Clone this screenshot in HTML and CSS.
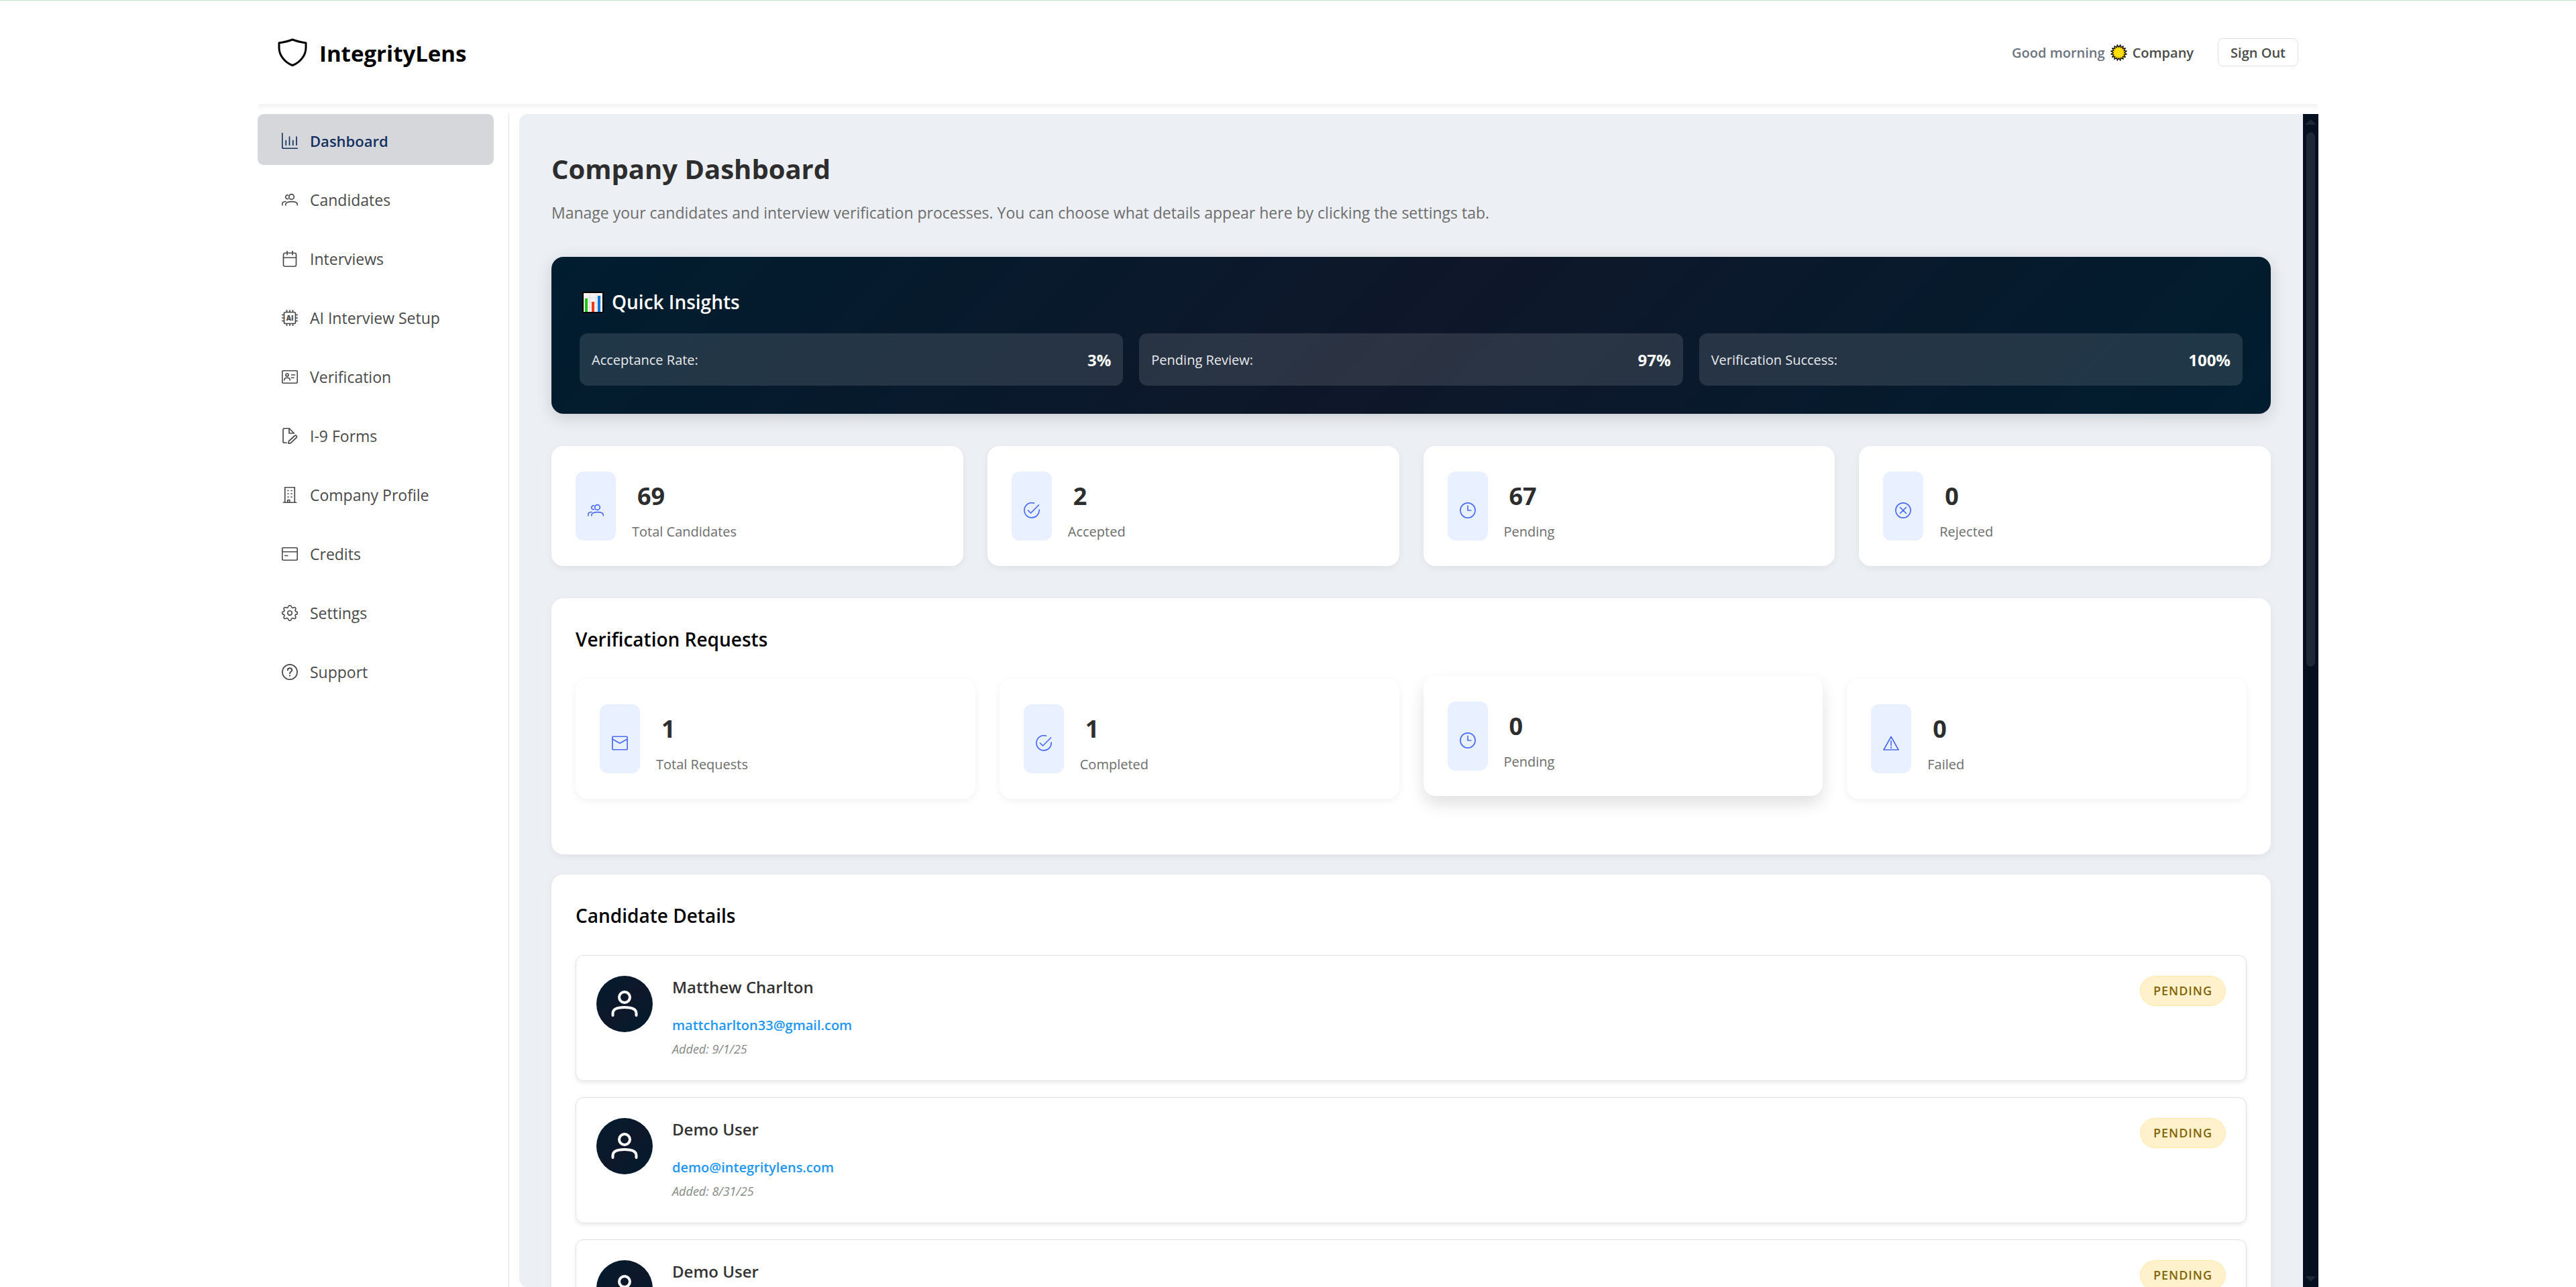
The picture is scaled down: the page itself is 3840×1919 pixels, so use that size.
FILE: index.html
```html
<!DOCTYPE html>
<html lang="en">
<head>
<meta charset="utf-8">
<meta name="viewport" content="width=device-width, initial-scale=1">
<title>IntegrityLens – Company Dashboard</title>
<link rel="stylesheet" href="styles.css">
</head>
<body>
<svg class="sprite" aria-hidden="true">
  <symbol id="i-shield" viewBox="0 0 44 42"><path d="M22 2C16 4.500 9 6 2 7v7c0 11 8 22 20 26.500C34 36 42 25 42 14V7C35 6 28 4.500 22 2z" stroke-width="3"/></symbol>
  <symbol id="i-chart" viewBox="0 0 24 24"><path d="M.75.75v20.500a2 2 0 0 0 2 2H23.250M6.250 11.500v6.750M11.500 6v12.250M16.750 11.500v6.750M22 6v12.250"/></symbol>
  <symbol id="i-people" viewBox="0 0 24 24"><circle cx="14.500" cy="7.500" r="3.800"/><path d="M5.800 19.800v-.8c0-2.800 3.600-4.300 8.800-4.300s8.700 1.500 8.700 4.300v.8M9.200 4.900a2.900 2.900 0 1 0 .3 5.600M.75 19.800v-1.300c0-2.400 2-4 5.200-4"/></symbol>
  <symbol id="i-calendar" viewBox="0 0 24 24"><rect x="2.500" y="3.250" width="19" height="20" rx="2.500"/><path d="M2.500 10.250h19M8 .75v5M16 .75v5"/></symbol>
  <symbol id="i-chip" viewBox="0 0 24 24"><rect x="3.500" y="3.500" width="17" height="17" rx="2"/><path d="M7.500 3.500V.75M12 3.500V.75M16.500 3.500V.75M7.500 23.250V20.500M12 23.250V20.500M16.500 23.250V20.500M3.500 7.500H.75M3.500 12H.75M3.500 16.500H.75M23.250 7.500H20.500M23.250 12H20.500M23.250 16.500H20.500"/></symbol>
  <symbol id="i-id" viewBox="0 0 24 24"><rect x=".75" y="2.750" width="22.500" height="18.500" rx="1.500"/><circle cx="8" cy="9" r="2"/><path d="M3.750 16.750c0-2.500 1.800-3.500 4.250-3.500s4.250 1 4.250 3.500M14.500 9h5M14.500 13.250h3.500"/></symbol>
  <symbol id="i-form" viewBox="0 0 24 24"><path d="M7.250 22.250H4a2 2 0 0 1-2-2V2.750a2 2 0 0 1 2-2h7L18.250 8M11 .75V8h7.250M10 23.250l.5-3.500 8.800-8a1.900 1.900 0 0 1 2.700 0 1.900 1.900 0 0 1 0 2.700l-8.700 8.200z"/></symbol>
  <symbol id="i-building" viewBox="0 0 24 24"><path d="M2.500 23.250h19M4.750 23.250V.75h14.500v22.500M8.750 23v-3.500h3V23M9 5.500h1M14 5.500h1M9 10.250h1M14 10.250h1M9 15h1M14 15h1"/></symbol>
  <symbol id="i-card" viewBox="0 0 24 24"><rect x=".75" y="2.750" width="22.500" height="18.500" rx="1.500"/><path d="M.75 8.750h22.500M4.750 14.500h4"/></symbol>
  <symbol id="i-gear" viewBox="0 0 16 16"><path stroke-width="1.100" d="M9.500 1.600c-.4-1.450-2.600-1.450-3 0l-.15.450a1.250 1.250 0 0 1-1.750.7l-.4-.2c-1.300-.7-2.600.65-1.950 1.900l.25.400a1.250 1.250 0 0 1-.75 1.750l-.45.150c-1.400.4-1.400 2.100 0 2.500l.45.150a1.250 1.250 0 0 1 .75 1.750l-.25.400c-.65 1.250.65 2.600 1.950 1.900l.4-.2a1.250 1.250 0 0 1 1.750.7l.15.450c.4 1.450 2.600 1.450 3 0l.15-.45a1.250 1.250 0 0 1 1.750-.7l.4.200c1.300.7 2.600-.65 1.950-1.900l-.25-.4a1.250 1.250 0 0 1 .75-1.750l.45-.15c1.400-.4 1.400-2.100 0-2.500l-.45-.15a1.250 1.250 0 0 1-.75-1.750l.25-.4c.65-1.250-.65-2.600-1.950-1.900l-.4.200a1.250 1.250 0 0 1-1.750-.7z"/><circle cx="8" cy="8" r="2.200" stroke-width="1.100"/></symbol>
  <symbol id="i-help" viewBox="0 0 24 24"><circle cx="12" cy="12" r="11.100"/><path d="M8.750 9.250c0-1.900 1.400-3 3.250-3s3.250 1.200 3.250 2.900c0 2.300-3.250 2.300-3.250 5.100M12 17.250v.6" stroke-width="2"/></symbol>
  <symbol id="i-check" viewBox="0 0 24 24"><path d="M15.500 1.300A11.100 11.100 0 1 0 23.100 11M6.500 12l4 4L22.500 4"/></symbol>
  <symbol id="i-clock" viewBox="0 0 24 24"><circle cx="12" cy="12" r="11.100"/><path d="M12 5.250V12h4.750"/></symbol>
  <symbol id="i-cross" viewBox="0 0 24 24"><circle cx="12" cy="12" r="11.100"/><path d="M7.500 7.500l9 9M16.500 7.500l-9 9"/></symbol>
  <symbol id="i-mail" viewBox="0 0 24 24"><rect x=".9" y="2.250" width="22.200" height="19.500" rx="1"/><path d="M.9 6L12 12.250 23.100 6"/></symbol>
  <symbol id="i-warn" viewBox="0 0 24 24"><path d="M12 2.500L23 22H1zM12 8.750v6.500M12 17.500v2"/></symbol>
  <symbol id="i-user" viewBox="0 0 40 40"><circle cx="20" cy="10" r="8" stroke-width="4"/><path d="M2.500 37v-3c0-6 6-9 17.500-9s17.500 3 17.500 9v3" stroke-width="4"/></symbol>
</svg>

<div class="shell">
  <header class="topbar">
    <div class="brand"><svg class="brand-mark"><use href="#i-shield"/></svg><span>IntegrityLens</span></div>
    <div class="account">
      <p class="greeting"><span>Good morning</span>
        <svg class="sun" viewBox="-12.500 -12.500 25 25" role="img" aria-label="Sun"><path fill="#ffe000" stroke="#000" stroke-width="1.300" stroke-linejoin="round" d="M8.200 0 11.600 2.300 7.600 3.100 9.800 6.600 5.800 5.800 6.600 9.800 3.100 7.600 2.300 11.600 0 8.200-2.300 11.600-3.100 7.600-6.600 9.800-5.800 5.800-9.800 6.600-7.600 3.100-11.600 2.300-8.200 0-11.600-2.300-7.600-3.100-9.800-6.600-5.800-5.800-6.600-9.800-3.100-7.600-2.300-11.600 0-8.200 2.300-11.600 3.100-7.600 6.600-9.800 5.800-5.800 9.800-6.600 7.600-3.100 11.600-2.300z"/><circle r="7" fill="none" stroke="#ffc400" stroke-width="1"/></svg>
        <strong>Company</strong></p>
      <button type="button" class="signout">Sign Out</button>
    </div>
  </header>

  <div class="body">
    <nav class="sidebar" aria-label="Main">
      <a href="#dashboard" class="nav-item active" aria-current="page"><svg class="icon"><use href="#i-chart"/></svg>Dashboard</a>
      <a href="#candidates" class="nav-item"><svg class="icon"><use href="#i-people"/></svg>Candidates</a>
      <a href="#interviews" class="nav-item"><svg class="icon"><use href="#i-calendar"/></svg>Interviews</a>
      <a href="#ai-setup" class="nav-item"><svg class="icon" viewBox="0 0 24 24"><use href="#i-chip"/><text class="chip-text" x="12" y="15.500" text-anchor="middle">AI</text></svg>AI Interview Setup</a>
      <a href="#verification" class="nav-item"><svg class="icon"><use href="#i-id"/></svg>Verification</a>
      <a href="#i9" class="nav-item"><svg class="icon"><use href="#i-form"/></svg>I-9 Forms</a>
      <a href="#profile" class="nav-item"><svg class="icon"><use href="#i-building"/></svg>Company Profile</a>
      <a href="#credits" class="nav-item"><svg class="icon"><use href="#i-card"/></svg>Credits</a>
      <a href="#settings" class="nav-item"><svg class="icon"><use href="#i-gear"/></svg>Settings</a>
      <a href="#support" class="nav-item"><svg class="icon"><use href="#i-help"/></svg>Support</a>
    </nav>

    <main class="content">
      <h1>Company Dashboard</h1>
      <p class="lead">Manage your candidates and interview verification processes. You can choose what details appear here by clicking the settings tab.</p>

      <section class="insights">
        <h2><svg class="bars" viewBox="0 0 36 36" aria-hidden="true"><path fill="#000" d="M4 3h32v32H4z"/><path fill="#f4f2f2" d="M6 5h28v28H6z"/><path stroke="#ddd" d="M6 12h28M6 19h28M6 26h28M15 5v28M25 5v28"/><path fill="#16c60c" d="M8 13h4v20H8z"/><path fill="#f03a17" d="M18 18h4v15h-4z"/><path fill="#0078d7" d="M27 9h4v24h-4z"/></svg>Quick Insights</h2>
        <dl class="insight-row">
          <div><dt>Acceptance Rate:</dt><dd>3%</dd></div>
          <div><dt>Pending Review:</dt><dd>97%</dd></div>
          <div><dt>Verification Success:</dt><dd>100%</dd></div>
        </dl>
      </section>

      <div class="stats">
        <article class="stat"><span class="tile"><svg class="icon"><use href="#i-people"/></svg></span><div><p class="num">69</p><p class="label">Total Candidates</p></div></article>
        <article class="stat"><span class="tile"><svg class="icon"><use href="#i-check"/></svg></span><div><p class="num">2</p><p class="label">Accepted</p></div></article>
        <article class="stat"><span class="tile"><svg class="icon"><use href="#i-clock"/></svg></span><div><p class="num">67</p><p class="label">Pending</p></div></article>
        <article class="stat"><span class="tile"><svg class="icon"><use href="#i-cross"/></svg></span><div><p class="num">0</p><p class="label">Rejected</p></div></article>
      </div>

      <section class="panel">
        <h2>Verification Requests</h2>
        <div class="stats">
          <article class="stat"><span class="tile"><svg class="icon"><use href="#i-mail"/></svg></span><div><p class="num">1</p><p class="label">Total Requests</p></div></article>
          <article class="stat"><span class="tile"><svg class="icon"><use href="#i-check"/></svg></span><div><p class="num">1</p><p class="label">Completed</p></div></article>
          <article class="stat raised"><span class="tile"><svg class="icon"><use href="#i-clock"/></svg></span><div><p class="num">0</p><p class="label">Pending</p></div></article>
          <article class="stat"><span class="tile"><svg class="icon"><use href="#i-warn"/></svg></span><div><p class="num">0</p><p class="label">Failed</p></div></article>
        </div>
      </section>

      <section class="panel">
        <h2>Candidate Details</h2>
        <ul class="candidates">
          <li class="candidate"><span class="avatar"><svg><use href="#i-user"/></svg></span><div class="who"><h3>Matthew Charlton</h3><a href="mailto:mattcharlton33@gmail.com">mattcharlton33@gmail.com</a><p>Added: 9/1/25</p></div><span class="badge">PENDING</span></li>
          <li class="candidate"><span class="avatar"><svg><use href="#i-user"/></svg></span><div class="who"><h3>Demo User</h3><a href="mailto:demo@integritylens.com">demo@integritylens.com</a><p>Added: 8/31/25</p></div><span class="badge">PENDING</span></li>
          <li class="candidate"><span class="avatar"><svg><use href="#i-user"/></svg></span><div class="who"><h3>Demo User</h3></div><span class="badge">PENDING</span></li>
        </ul>
      </section>
    </main>

    <div class="scrollbar" aria-hidden="true">
      <span class="arrow up"></span>
      <div class="track"><div class="thumb"></div></div>
      <span class="arrow down"></span>
    </div>
  </div>
</div>
</body>
</html>
```
FILE: styles.css
```css
* { box-sizing: border-box; }

body, h1, h2, h3, p, dl, dd, ul { margin: 0; padding: 0; }

body {
  height: 100vh;
  overflow: hidden;
  border-top: 1px solid #c3e3c5;
  background: #fff;
  color: #4a4a4a;
  font-family: "Open Sans", "Noto Sans", sans-serif;
  font-size: 20px;
}

a { text-decoration: none; }

.sprite { display: none; }

.icon, .brand-mark, .avatar svg {
  flex: none;
  fill: none;
  stroke: currentColor;
  stroke-width: 1.7;
  stroke-linecap: round;
  stroke-linejoin: round;
}

.icon { width: 24px; height: 24px; }

.chip-text {
  fill: currentColor;
  stroke: none;
  font-size: 10px;
  font-weight: 800;
}

.shell {
  display: flex;
  flex-direction: column;
  width: 80%;
  height: 100%;
  margin: 0 auto;
}

/* Header */
.topbar {
  display: flex;
  flex: none;
  align-items: center;
  justify-content: space-between;
  height: 154px;
  padding: 0 30px;
  box-shadow: 0 3px 9px rgba(0, 0, 0, .08);
  clip-path: inset(0 0 -14px 0);
}

.brand {
  display: flex;
  align-items: center;
  gap: 18px;
  color: #000;
  font-size: 33px;
  font-weight: 700;
}

.brand span { padding-top: 3px; line-height: 48px; }

.brand-mark { width: 44px; height: 42px; }

.account { display: flex; align-items: center; gap: 36px; }

.greeting {
  display: flex;
  align-items: center;
  gap: 8px;
  color: #6b7280;
  font-weight: 600;
}

.greeting strong { color: #4a4a4a; font-weight: 600; }

.sun { width: 25px; height: 25px; }

.signout {
  height: 42px;
  padding: 0 18px;
  border: 1px solid #e0e0e0;
  border-radius: 8px;
  background: #fff;
  color: #4a4a4a;
  font: 600 20px "Open Sans", "Noto Sans", sans-serif;
}

/* Columns under the header */
.body {
  display: flex;
  flex: 1;
  min-height: 0;
  margin-top: 15px;
}

.sidebar {
  display: flex;
  flex: none;
  flex-direction: column;
  gap: 12px;
  width: 375px;
  margin-right: 15px;
  padding-right: 22px;
  border-right: 1px solid #e0e0e0;
}

.nav-item {
  display: flex;
  align-items: center;
  gap: 18px;
  height: 76px;
  padding: 3px 36px 0;
  border-radius: 9px;
  color: #4a4a4a;
  font-size: 23px;
}

.nav-item.active {
  background: #d5d7db;
  color: #14305f;
  font-size: 22px;
  font-weight: 600;
}

.content {
  flex: 1;
  min-width: 0;
  padding: 48px 48px 0;
  overflow: hidden;
  border-radius: 12px 0 0 12px;
  background: #ecf0f5;
}

h1 {
  margin-bottom: 12px;
  color: #2d2d2d;
  font-size: 40px;
  font-weight: 700;
  line-height: 68px;
}

.lead {
  margin-bottom: 46px;
  color: #6d6d6d;
  font-size: 23px;
  line-height: 39px;
}

/* Quick insights */
.insights {
  padding: 42px;
  border-radius: 18px;
  background: linear-gradient(135deg, #001d2f, #0f172a 50%, #001d2f);
  box-shadow: 0 6px 24px rgba(0, 0, 0, .15);
  color: #fff;
}

.insights h2 {
  display: flex;
  align-items: center;
  gap: 12px;
  margin-bottom: 22px;
  font-size: 28px;
  font-weight: 600;
  line-height: 50px;
}

.bars { width: 36px; height: 36px; }

.insight-row {
  display: grid;
  grid-template-columns: repeat(3, 1fr);
  gap: 24px;
}

.insight-row div {
  display: flex;
  align-items: center;
  justify-content: space-between;
  height: 78px;
  padding: 0 18px;
  border-radius: 12px;
  background: rgba(255, 255, 255, .12);
}

.insight-row dt { color: #e8eaed; }
.insight-row dd { font-size: 24px; font-weight: 700; }

/* Stat cards */
.stats {
  display: grid;
  grid-template-columns: repeat(4, 1fr);
  gap: 36px;
  margin: 48px 0;
}

.stat {
  display: flex;
  align-items: center;
  gap: 24px;
  padding: 36px;
  border-radius: 18px;
  background: #fff;
  box-shadow: 0 3px 12px rgba(0, 0, 0, .06);
}

.stat.raised {
  box-shadow: 0 12px 24px rgba(0, 0, 0, .12);
  transform: translateY(-4px);
}

.tile {
  display: flex;
  align-items: center;
  justify-content: center;
  width: 60px;
  height: 103px;
  padding-top: 12px;
  border-radius: 12px;
  background: #e9f0ff;
  color: #4a6cf7;
}

.num {
  padding-left: 8px;
  color: #2d2d2d;
  font-size: 36px;
  font-weight: 700;
  line-height: 77px;
}

.label {
  color: #6d6d6d;
  font-size: 20px;
  line-height: 30px;
}

/* White panels */
.panel {
  margin-bottom: 30px;
  padding: 36px;
  border-radius: 18px;
  background: #fff;
  box-shadow: 0 3px 12px rgba(0, 0, 0, .06);
}

.panel h2 {
  margin-bottom: 34px;
  color: #000;
  font-size: 28px;
  font-weight: 600;
  line-height: 50px;
}

.panel .stats { margin: 0 0 47px; }

.candidates {
  display: grid;
  gap: 24px;
  list-style: none;
}

.candidate {
  display: flex;
  align-items: flex-start;
  gap: 29px;
  min-height: 188px;
  padding: 30px;
  border: 1px solid #e0e0e0;
  border-radius: 12px;
  box-shadow: 0 3px 6px rgba(0, 0, 0, .08);
}

.avatar {
  display: flex;
  flex: none;
  align-items: center;
  justify-content: center;
  width: 84px;
  height: 84px;
  border-radius: 50%;
  background: linear-gradient(135deg, #001d2f, #0f172a 50%, #001d2f);
  color: #fff;
}

.avatar svg { width: 40px; height: 40px; }

.who { flex: 1; }

.who h3 {
  margin-bottom: 22px;
  color: #333;
  font-size: 24px;
  font-weight: 600;
  line-height: 34px;
}

.who a {
  display: block;
  color: #2196f3;
  font-size: 20px;
  font-weight: 600;
  line-height: 36px;
}

.who p {
  color: #888;
  font-size: 18px;
  font-style: italic;
  line-height: 34px;
}

.badge {
  padding: 0 19px;
  border: 1px solid #ffeaa7;
  border-radius: 24px;
  background: #fff1cc;
  color: #856404;
  font-size: 18px;
  font-weight: 600;
  letter-spacing: 1px;
  line-height: 43px;
}

/* Scroll rail */
.scrollbar {
  display: flex;
  flex: none;
  flex-direction: column;
  align-items: center;
  gap: 11px;
  width: 23px;
  padding: 8px 0;
  background: #050f20;
}

.track { flex: 1; width: 13px; }

.thumb {
  height: 47%;
  border-radius: 7px;
  background: #1e2738;
}

.arrow { width: 16px; height: 8px; background: #1e2738; }
.arrow.up { clip-path: polygon(50% 0, 100% 100%, 0 100%); }
.arrow.down { clip-path: polygon(0 0, 100% 0, 50% 100%); }
```
